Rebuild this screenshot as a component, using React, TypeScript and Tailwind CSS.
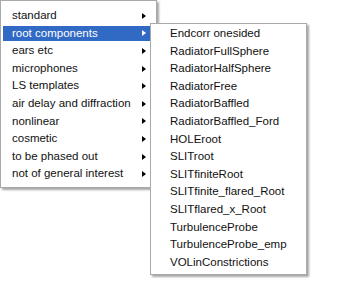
import React from "react";

const leftItems = [
  "standard",
  "root components",
  "ears etc",
  "microphones",
  "LS templates",
  "air delay and diffraction",
  "nonlinear",
  "cosmetic",
  "to be phased out",
  "not of general interest",
];

const subItems = [
  "Endcorr onesided",
  "RadiatorFullSphere",
  "RadiatorHalfSphere",
  "RadiatorFree",
  "RadiatorBaffled",
  "RadiatorBaffled_Ford",
  "HOLEroot",
  "SLITroot",
  "SLITfiniteRoot",
  "SLITfinite_flared_Root",
  "SLITflared_x_Root",
  "TurbulenceProbe",
  "TurbulenceProbe_emp",
  "VOLinConstrictions",
];

export default function App() {
  return (
    <div
      className="relative w-[346px] h-[285px] bg-white overflow-hidden text-[11.5px] text-[#111]"
      style={{ fontFamily: '"Liberation Sans", Arial, sans-serif' }}
    >
      {/* main menu */}
      <div className="w-[157px] border border-[#a9a9a9] bg-white pt-[6px] pb-[4px] shadow-[2px_2px_2px_rgba(0,0,0,0.35)]">
        {leftItems.map((t, i) => {
          const sel = i === 1;
          return (
            <div key={t} className="h-[17.6px] flex items-stretch px-[2px] py-[1.3px]">
              <div
                className={`flex-1 flex items-center pl-[9px] pr-[8px] ${
                  sel ? "bg-[#316ac5] text-white" : ""
                }`}
              >
                <span className="flex-1 leading-none">{t}</span>
                <span
                  className={`w-0 h-0 border-y-[3.5px] border-y-transparent border-l-[4px] ${
                    sel ? "border-l-white" : "border-l-black"
                  }`}
                />
              </div>
            </div>
          );
        })}
      </div>

      {/* submenu */}
      <div className="absolute left-[150px] top-[23px] w-[157px] border border-[#a9a9a9] bg-white pt-[1px] pb-[3px] shadow-[2px_2px_2px_rgba(0,0,0,0.35)]">
        {subItems.map((t) => (
          <div key={t} className="h-[17.6px] flex items-center pl-[19px] leading-none">
            {t}
          </div>
        ))}
      </div>
    </div>
  );
}
